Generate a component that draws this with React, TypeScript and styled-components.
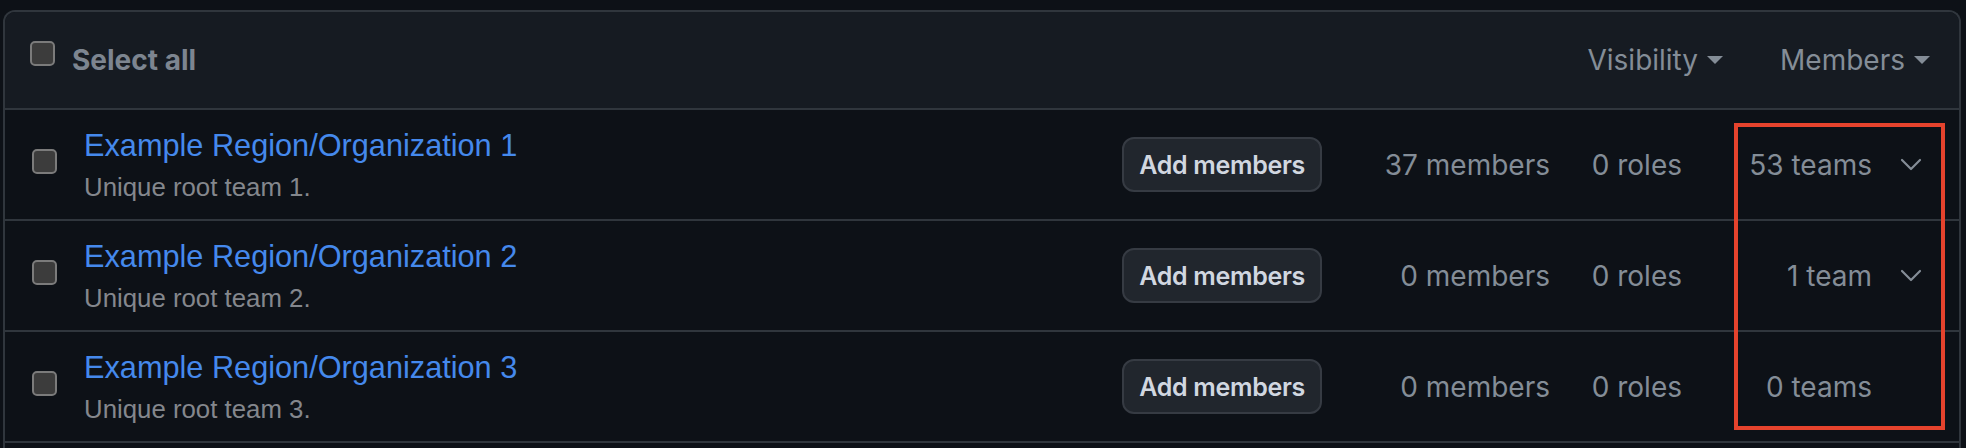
import React from 'react';
import styled, { createGlobalStyle } from 'styled-components';

const Global = createGlobalStyle`
  html, body { margin: 0; padding: 0; background: #0d1117; overflow: hidden; }
  body { font-family: Inter, "Noto Sans", sans-serif; }
`;

const Page = styled.div`
  position: relative;
  box-sizing: border-box;
  height: 448px;
  padding: 10px 5px 0 3px;
`;

const Box = styled.div`
  border: 2px solid #30363d;
  border-bottom: none;
  border-radius: 12px 12px 0 0;
  background: #0d1117;
`;

const Header = styled.div`
  display: flex;
  align-items: center;
  height: 96px;
  padding: 0 29px 0 25px;
  background: #161b22;
  border-bottom: 2px solid #30363d;
  border-radius: 10px 10px 0 0;
`;

const Check = styled.input.attrs({ type: 'checkbox' })<{ $shift?: number }>`
  appearance: none;
  -webkit-appearance: none;
  margin: 0;
  width: 25px;
  height: 25px;
  box-sizing: border-box;
  border: 2px solid #7b7b7b;
  border-radius: 5px;
  background: #3c3c3c;
  flex: none;
  position: relative;
  top: ${(p) => p.$shift ?? 0}px;
`;

const SelectAll = styled.span`
  margin-left: 17px;
  font-size: 28px;
  line-height: 34px;
  font-weight: 700;
  color: #7d8590;
`;

const Filters = styled.div`
  margin-left: auto;
  display: flex;
  align-items: center;
  gap: 57px;
`;

const Filter = styled.span`
  display: inline-flex;
  align-items: center;
  gap: 9px;
  font-size: 28px;
  line-height: 34px;
  color: #848d97;
`;

const Row = styled.div`
  display: grid;
  grid-template-columns: 25px 1fr auto 228px 132px 190px 50px;
  align-items: center;
  height: 109px;
  padding: 0 37px 0 27px;
  border-bottom: 2px solid #30363d;
`;

const TitleBlock = styled.div`
  margin-left: 27px;
  margin-top: 2px;
  display: flex;
  flex-direction: column;
  gap: 3px;
  font-family: "Liberation Sans", Arial, sans-serif;
`;

const TitleLink = styled.a`
  font-size: 30.7px;
  line-height: 40px;
  color: #4589ec;
  text-decoration: none;
`;

const Desc = styled.span`
  font-size: 25.8px;
  line-height: 36px;
  color: #84878d;
`;

const AddButton = styled.button`
  height: 55px;
  box-sizing: border-box;
  padding: 0 15px;
  border: 2px solid #363b43;
  border-radius: 12px;
  background: #21262d;
  color: #d1d7e0;
  font-family: Inter, "Noto Sans", sans-serif;
  font-size: 25px;
  font-weight: 600;
  letter-spacing: -0.3px;
`;

const Meta = styled.span`
  justify-self: end;
  font-size: 28px;
  line-height: 34px;
  color: #848d97;
`;

const ChevronCell = styled.span`
  justify-self: end;
  display: flex;
  align-items: center;
`;

const Filler = styled.div`
  height: 8px;
`;

const Annotation = styled.div`
  position: absolute;
  left: 1734px;
  top: 123px;
  width: 211px;
  height: 307px;
  box-sizing: border-box;
  border: 4px solid #e5432d;
  pointer-events: none;
`;

const Caret = () => (
  <svg width="16" height="8" viewBox="0 0 16 8">
    <polygon points="0,0 16,0 8,8" fill="#848d97" />
  </svg>
);

const Chevron = () => (
  <svg width="22" height="14" viewBox="0 0 22 14">
    <polyline points="2,2 11,11 20,2" fill="none" stroke="#848d97" strokeWidth="2.2" strokeLinecap="round" strokeLinejoin="round" />
  </svg>
);

type Team = { name: string; desc: string; members: string; roles: string; teams: string; expandable: boolean };

const teams: Team[] = [
  { name: 'Example Region/Organization 1', desc: 'Unique root team 1.', members: '37 members', roles: '0 roles', teams: '53 teams', expandable: true },
  { name: 'Example Region/Organization 2', desc: 'Unique root team 2.', members: '0 members', roles: '0 roles', teams: '1 team', expandable: true },
  { name: 'Example Region/Organization 3', desc: 'Unique root team 3.', members: '0 members', roles: '0 roles', teams: '0 teams', expandable: false },
];

export default function App() {
  return (
    <>
      <Global />
      <Page>
        <Box>
          <Header>
            <Check $shift={-7} aria-label="Select all" />
            <SelectAll>Select all</SelectAll>
            <Filters>
              <Filter>Visibility <Caret /></Filter>
              <Filter>Members <Caret /></Filter>
            </Filters>
          </Header>
          {teams.map((t) => (
            <Row key={t.name}>
              <Check $shift={-3} aria-label={t.name} />
              <TitleBlock>
                <TitleLink href="#">{t.name}</TitleLink>
                <Desc>{t.desc}</Desc>
              </TitleBlock>
              <AddButton>Add members</AddButton>
              <Meta>{t.members}</Meta>
              <Meta>{t.roles}</Meta>
              <Meta>{t.teams}</Meta>
              <ChevronCell>{t.expandable ? <Chevron /> : null}</ChevronCell>
            </Row>
          ))}
          <Filler />
        </Box>
        <Annotation />
      </Page>
    </>
  );
}
